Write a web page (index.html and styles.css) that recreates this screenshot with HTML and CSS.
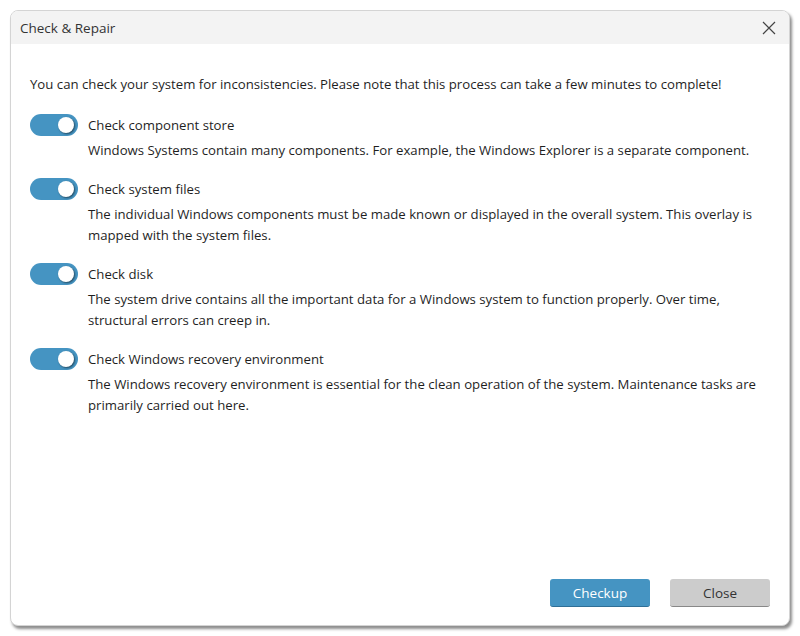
FILE: index.html
```html
<!DOCTYPE html>
<html>
<head>
<meta charset="utf-8">
<link rel="stylesheet" href="styles.css">
</head>
<body>
<div class="window">
  <div class="titlebar">
    <span class="title">Check &amp; Repair</span>
    <svg class="close-x" width="14" height="14" viewBox="0 0 14 14"><path d="M1 1L13 13M13 1L1 13" stroke="#444" stroke-width="1.2" fill="none"/></svg>
  </div>
  <div class="content">
    <p class="intro">You can check your system for inconsistencies. Please note that this process can take a few minutes to complete!</p>
    <div class="items">
      <div class="item">
        <div class="head"><span class="toggle"><span class="knob"></span></span><span class="label">Check component store</span></div>
        <p class="desc">Windows Systems contain many components. For example, the Windows Explorer is a separate component.</p>
      </div>
      <div class="item">
        <div class="head"><span class="toggle"><span class="knob"></span></span><span class="label">Check system files</span></div>
        <p class="desc">The individual Windows components must be made known or displayed in the overall system. This overlay is mapped with the system files.</p>
      </div>
      <div class="item">
        <div class="head"><span class="toggle"><span class="knob"></span></span><span class="label">Check disk</span></div>
        <p class="desc">The system drive contains all the important data for a Windows system to function properly. Over time, structural errors can creep in.</p>
      </div>
      <div class="item">
        <div class="head"><span class="toggle"><span class="knob"></span></span><span class="label">Check Windows recovery environment</span></div>
        <p class="desc">The Windows recovery environment is essential for the clean operation of the system. Maintenance tasks are primarily carried out here.</p>
      </div>
    </div>
  </div>
  <div class="footer">
    <button class="btn primary">Checkup</button>
    <button class="btn secondary">Close</button>
  </div>
</div>
</body>
</html>
```

FILE: styles.css
```css
html, body {
  margin: 0;
  padding: 0;
  background: #ffffff;
  width: 800px;
  height: 636px;
  overflow: hidden;
}
body {
  padding: 10px 10px 10px 10px;
  box-sizing: border-box;
  font-family: "Open Sans", "Noto Sans", sans-serif;
  font-size: 13.2px;
  color: #1f1f1f;
}
.window {
  width: 780px;
  height: 616px;
  border: 1px solid #d4d4d4;
  border-radius: 8px;
  box-sizing: border-box;
  background: #fff;
  box-shadow: 2px 3px 3px rgba(0,0,0,0.45);
  display: flex;
  flex-direction: column;
  overflow: hidden;
}
.titlebar {
  height: 33px;
  background: #f3f3f3;
  display: flex;
  align-items: center;
  justify-content: space-between;
  padding: 0 13px 0 9px;
  flex-shrink: 0;
}
.title {
  font-size: 13.5px;
  color: #333;
}
.content {
  flex: 1;
  padding: 30px 19px 0 19px;
}
.intro {
  margin: 0 0 19px 0;
  line-height: 21px;
}
.items {
  display: flex;
  flex-direction: column;
  gap: 17px;
}
.head {
  display: flex;
  align-items: center;
  gap: 10px;
  height: 22px;
}
.toggle {
  width: 48px;
  height: 22px;
  border-radius: 11px;
  background: #4594c2;
  position: relative;
  flex-shrink: 0;
}
.knob {
  position: absolute;
  width: 16px;
  height: 16px;
  border-radius: 50%;
  background: #fff;
  top: 3px;
  right: 4px;
  box-shadow: 1px 1px 2px rgba(0,0,0,0.5);
}
.desc {
  margin: 4px 0 0 58px;
  line-height: 21px;
}
.footer {
  display: flex;
  justify-content: flex-end;
  gap: 20px;
  padding: 0 19px 18px 0;
}
.btn {
  width: 100px;
  height: 28px;
  border-radius: 3px;
  font-family: "Open Sans", "Noto Sans", sans-serif;
  font-size: 13.5px;
  border: none;
  padding: 0;
}
.primary {
  background: #4594c2;
  color: #fff;
  border-bottom: 1px solid #2f6f96;
}
.secondary {
  background: #cccccc;
  color: #333;
  border-bottom: 1px solid #888;
}
```
